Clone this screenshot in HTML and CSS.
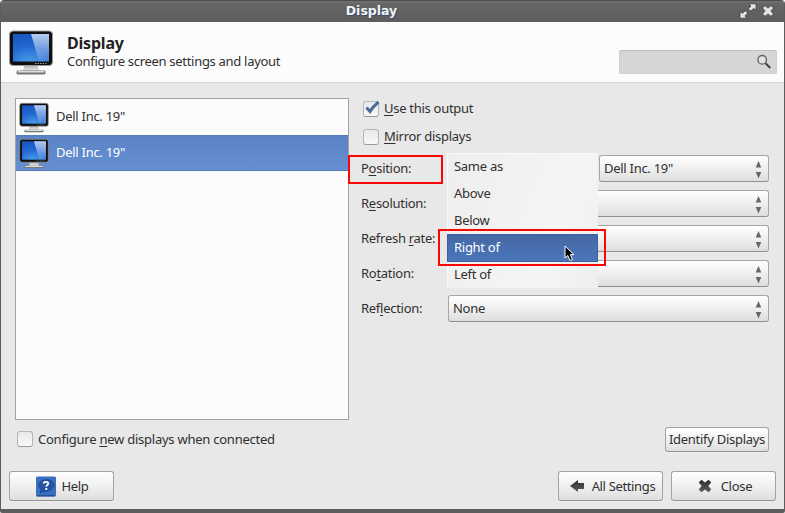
FILE: index.html
```html
<!DOCTYPE html>
<html lang="en">
<head>
<meta charset="utf-8">
<title>Display</title>
<link rel="stylesheet" href="styles.css">
</head>
<body>
<svg width="0" height="0" class="defs" aria-hidden="true">
  <defs>
    <radialGradient id="screen" cx=".45" cy="1.050" r="1"><stop offset="0" stop-color="#4ba2ea"/><stop offset=".6" stop-color="#2268d2"/><stop offset="1" stop-color="#1a58c4"/></radialGradient>
    <linearGradient id="shine" x1="0" y1="0" x2="0" y2="1"><stop offset="0" stop-color="#b8ccf2"/><stop offset="1" stop-color="#b8ccf2" stop-opacity=".15"/></linearGradient>
    <linearGradient id="stand" x1="0" y1="0" x2="0" y2="1"><stop offset="0" stop-color="#aaa"/><stop offset="1" stop-color="#eee"/></linearGradient>
    <linearGradient id="dark" x1="0" y1="0" x2="0" y2="1"><stop offset="0" stop-color="#2c2c2c"/><stop offset="1" stop-color="#606060"/></linearGradient>
    <symbol id="monitor" viewBox="0 0 48 48">
      <path d="M18 36h12l1.500 6H16.500z" fill="url(#stand)" stroke="#bbb" stroke-width=".6"/>
      <rect x="9.500" y="41.500" width="29" height="4" rx="1.500" fill="#777"/>
      <rect x="11" y="42" width="26" height="1.500" fill="#ddd"/>
      <rect x="2.500" y="2" width="43" height="34.500" rx="3.500" fill="#101010" stroke="#9a9a9a" stroke-width="1"/>
      <rect x="6" y="5" width="36" height="27.500" fill="url(#screen)"/>
      <path d="M24 5H42V32.500H32z" fill="url(#shine)"/>
      <path d="M28 34.500h12" stroke="#999" stroke-width="1" stroke-dasharray="1.500 1"/>
    </symbol>
    <symbol id="spin" viewBox="0 0 7 18">
      <path d="M3.500 0L6.300 6.500H.7z" fill="#666"/><path d="M3.500 17.500L6.300 11H.7z" fill="#666"/>
    </symbol>
    <symbol id="cross" viewBox="0 0 14 14">
      <path d="M3.500.8L7 3.600 10.500.8 13.300 3.500 10.300 7l3 3.500-2.800 2.700L7 10.400l-3.500 2.800L.7 10.500l3-3.500-3-3.500z"/>
    </symbol>
  </defs>
</svg>
<div class="window">
  <div class="titlebar">
    <span class="caption">Display</span>
    <div class="controls">
      <svg class="expand" width="18" height="16" viewBox="0 0 18 16"><path d="M9.500.8H17v6.400l-2.300-1.700-2.900 2.600-2.500-2.400 2.700-2.700zM1 8.500l2.300 1.800 3-2.500 2.500 2.400-2.900 2.700L8 15.200H1z" fill="#e4e4e4" stroke="#3c3c3c" stroke-width=".8"/></svg>
      <svg width="12" height="12" viewBox="0 0 14 14" fill="#e4e4e4" stroke="#3c3c3c" stroke-width=".8"><use href="#cross"/></svg>
    </div>
  </div>
  <header class="header">
    <svg class="logo" width="48" height="48"><use href="#monitor"/></svg>
    <div class="heading">
      <h1>Display</h1>
      <p>Configure screen settings and layout</p>
    </div>
    <div class="search">
      <svg width="16" height="16" viewBox="0 0 16 16"><circle cx="6.200" cy="5.800" r="4.300" fill="#e2e2e2" stroke="#666" stroke-width="1.400"/><path d="M9.500 9.200L14.300 14" stroke="#444" stroke-width="2"/></svg>
    </div>
  </header>
  <main class="content">
    <section class="left">
      <ul class="list">
        <li><svg width="32" height="32"><use href="#monitor"/></svg><span class="t">Dell Inc. 19"</span></li>
        <li class="selected"><svg width="32" height="32"><use href="#monitor"/></svg><span class="t">Dell Inc. 19"</span></li>
      </ul>
      <div class="check new"><i class="box"></i><span class="t">Configure <u>n</u>ew displays when connected</span></div>
    </section>
    <section class="right">
      <div class="check use"><i class="box"><svg width="16" height="16" viewBox="0 0 16 16"><path d="M2.500 6.500L6 10.500Q8.500 6 14.500 1" fill="none" stroke="#4a6a9c" stroke-width="3"/></svg></i><span class="t"><u>U</u>se this output</span></div>
      <div class="check"><i class="box"></i><span class="t"><u>M</u>irror displays</span></div>
      <div class="form">
        <label class="t">P<u>o</u>sition:</label>
        <div class="combo short"><span class="t">Dell Inc. 19"</span><svg width="7" height="18"><use href="#spin"/></svg></div>
        <label class="t">R<u>e</u>solution:</label>
        <div class="combo"><svg width="7" height="18"><use href="#spin"/></svg></div>
        <label class="t">Refresh <u>r</u>ate:</label>
        <div class="combo"><svg width="7" height="18"><use href="#spin"/></svg></div>
        <label class="t">Ro<u>t</u>ation:</label>
        <div class="combo"><svg width="7" height="18"><use href="#spin"/></svg></div>
        <label class="t">Ref<u>l</u>ection:</label>
        <div class="combo"><span class="t">None</span><svg width="7" height="18"><use href="#spin"/></svg></div>
        <div class="mark mark-label"></div>
        <div class="menu">
          <div class="t">Same as</div>
          <div class="t">Above</div>
          <div class="t">Below</div>
          <div class="t active">Right of</div>
          <div class="t">Left of</div>
        </div>
        <div class="mark mark-item"></div>
        <svg class="pointer" width="12" height="18" viewBox="0 0 12 18"><path d="M1 1V13L3.800 10.500 6 15.500 8.500 14.500 6.300 9.700H10z" fill="#000" stroke="#fff" stroke-width="1"/></svg>
      </div>
      <button class="button identify"><span class="t">Identify Displays</span></button>
    </section>
  </main>
  <footer class="footer">
    <button class="button help"><svg width="20" height="21" viewBox="0 0 20 21"><rect y=".5" width="20" height="20" rx="1.500" fill="#3870c4"/><path d="M1 19.800h18" stroke="#254a80" stroke-width="1.200"/><path d="M4 17l1-3.500C-.5 9 4 3.500 10 3.500S18.500 7 18 10 13 16 8 15.500z" fill="#2555a2" stroke="#1d478c" stroke-width=".7"/><path d="M7.700 7.500Q7.700 5.800 10 5.800T12.300 7.500C12.300 9 10.300 8.800 10.300 10.800M10.300 12v2" fill="none" stroke="#fff" stroke-width="1.800"/></svg><span class="t">Help</span></button>
    <span class="grow"></span>
    <button class="button all"><svg width="14" height="12" viewBox="0 0 14 12"><path d="M0 6L8 0V3h6v6H8v3z" fill="url(#dark)"/></svg><span class="t">All Settings</span></button>
    <button class="button close"><svg width="14" height="14" viewBox="0 0 14 14" fill="url(#dark)"><use href="#cross"/></svg><span class="t">Close</span></button>
  </footer>
</div>
</body>
</html>
```
FILE: styles.css
```css
* { box-sizing: border-box; }
body { margin: 0; background: #fff; overflow: hidden; font: 13px/18px "Noto Sans", "Open Sans", sans-serif; letter-spacing: -.28px; color: #303030; }
.defs { position: absolute; }
.window { width: 785px; height: 513px; display: flex; flex-direction: column; background: #e8e8e8; border: 1px solid #5c5e5c; border-width: 0 1px 4px; border-radius: 4px 4px 2px 2px; overflow: hidden; }
.titlebar { height: 22px; flex: none; display: grid; grid-template-columns: 45px 1fr 45px; align-items: center; background: linear-gradient(#717171, #656565 15%, #5d5d5d); border-top: 1px solid #4d4d4d; }
.caption { grid-column: 2; text-align: center; padding-right: 42px; margin-top: -2px; font: bold 12.5px/20px "DejaVu Sans", sans-serif; letter-spacing: 0; color: #f2f2f2; text-shadow: 1px 1px 1px #314b70; }
.controls { display: flex; align-items: center; gap: 5px; margin-top: -1px; }
.header { height: 61px; flex: none; display: flex; background: #fcfcfc; border-bottom: 1px solid #d4d4d4; }
.logo { margin: 7px 0 0 6px; flex: none; }
.heading { margin: 12px 0 0 12px; white-space: nowrap; }
h1 { margin: 0; font-size: 16px; line-height: 18px; font-weight: bold; letter-spacing: -.2px; color: #222; }
p { margin: 0; letter-spacing: -.3px; }
.search { margin: 28px 7px 0 auto; width: 158px; height: 24px; background: #d6d6d6; border: 1px solid #d0d0d0; border-top-color: #bdbdbd; border-radius: 2px; display: flex; justify-content: flex-end; padding: 3px 4px 0 0; }
.t { white-space: nowrap; display: block; }
u { text-decoration-thickness: 1px; text-underline-offset: 2px; text-decoration-skip-ink: none; }
.content { height: 376px; flex: none; display: flex; padding: 15px 15px 0 14px; }
.left { width: 334px; margin-right: 12px; }
.list { list-style: none; margin: 0; padding: 0; height: 322px; background: #fcfcfc; border: 1px solid #a2a2a2; }
.list li { height: 36px; display: flex; align-items: center; padding-left: 2px; gap: 6px; }
.list li svg { margin-top: 1px; }
.list .t { margin-top: -2px; }
.list .selected { color: #fff; background: linear-gradient(#5a82c6, #6790d2); border: solid #527bb9; border-width: 1px 0; }
.check { display: flex; align-items: center; gap: 5px; height: 18px; }
.check .t { margin-top: -2px; }
.box { width: 16px; height: 16px; border: 1px solid #b6b6b6; border-bottom-color: #999; border-radius: 3px; background: linear-gradient(#e9e9e9, #f8f8f8); }
.box svg { display: block; margin: -1px 0 0 0; }
.new { margin: 10px 0 0 2px; letter-spacing: -.24px; }
.new .t { margin-top: 0; }
.right { width: 408px; display: flex; flex-direction: column; }
.right .check { margin-left: 2px; margin-top: 10px; }
.right .use { margin-top: 2px; }
.form { position: relative; display: grid; grid-template-columns: 87px 321px; grid-auto-rows: 28px; row-gap: 7px; align-items: center; margin-top: 8px; }
.combo { height: 27px; margin-top: 1px; display: flex; align-items: center; padding: 0 6px 0 4px; border: 1px solid #a6a6a6; border-bottom-color: #8f8f8f; border-radius: 3px; background: linear-gradient(#fff, #f1f1f1 45%, #dedede); box-shadow: 0 1px #ececec; }
.combo .t { margin-top: -1px; }
.combo svg { margin-left: auto; margin-top: 3px; }
.short { width: 170px; justify-self: end; }
.menu { position: absolute; left: 86px; top: -1px; width: 151px; height: 135px; background: linear-gradient(110deg, #eee, #f5f5f5 70%, #eee); border-top: 1px solid #fafafa; border-left: 1px solid #fafafa; }
.menu div { height: 27px; padding: 3px 0 0 6px; }
.menu .active { color: #fff; background: linear-gradient(#4568a2, #4b76bc); border: 1px solid #3e619b; padding: 3px 0 0 6px; margin: -1px 0 0 -1px; height: 28px; }
.mark { position: absolute; border: 2px solid #fb0505; }
.mark-label { left: -13px; top: 1px; width: 95px; height: 29px; }
.mark-item { left: 77px; top: 75px; width: 168px; height: 37px; }
.pointer { position: absolute; left: 203px; top: 91px; }
.button { margin: 0; padding: 0; font: inherit; letter-spacing: inherit; color: inherit; display: flex; align-items: center; justify-content: center; border: 1px solid #a3a3a3; border-bottom-color: #929292; border-radius: 3px; background: linear-gradient(#fff, #f0f0f0 50%, #dedede); box-shadow: 0 1px #efefef; }
.button .t { margin-top: -1px; }
.identify { width: 104px; height: 25px; margin: 105px 0 0 304px; }
.footer { display: flex; padding: 12px 8px 0; }
.footer .button { width: 105px; height: 30px; }
.grow { flex: 1; }
.footer .help { gap: 5px; padding-left: 2px; }
.all { margin-right: 8px; gap: 8px; letter-spacing: -.35px; }
.footer .all { padding-left: 4px; }
.footer .close { gap: 9px; padding-left: 3px; }
```
